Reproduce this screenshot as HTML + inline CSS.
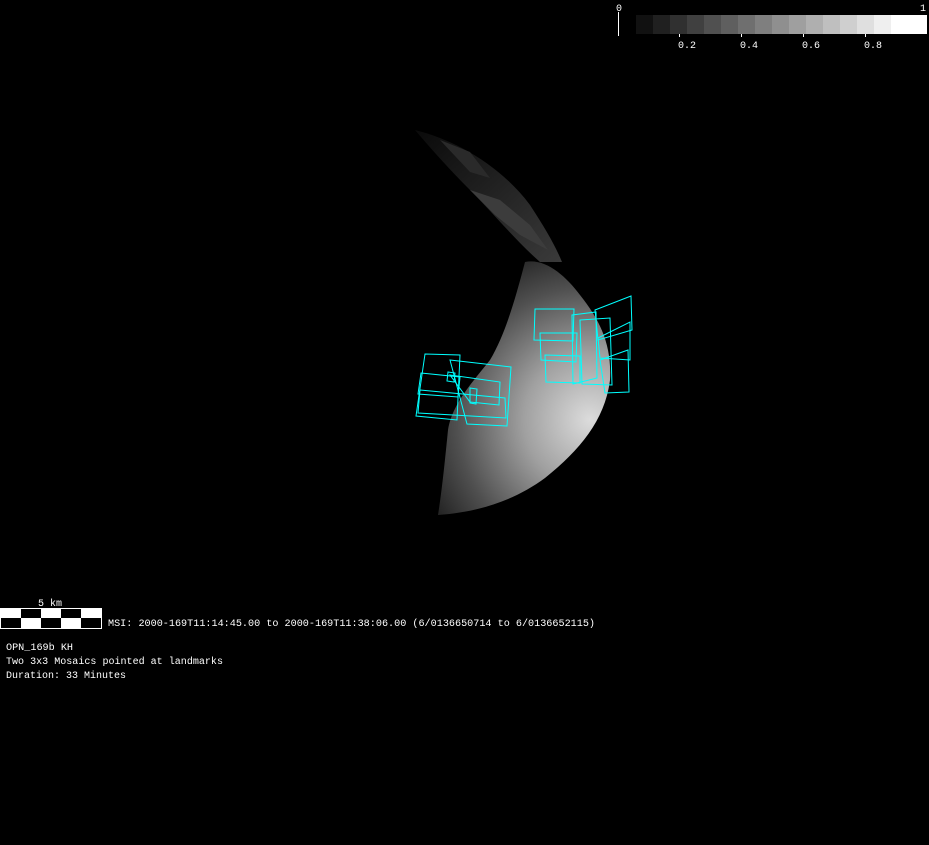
<!DOCTYPE html>
<html><head><style>
html,body{margin:0;padding:0;background:#000;width:929px;height:845px;overflow:hidden}
svg{display:block}
text{font-family:"Liberation Mono",monospace;fill:#fff;font-size:10px}
</style></head><body>
<svg width="929" height="845" viewBox="0 0 929 845">
<defs>
<radialGradient id="g" cx="590" cy="420" r="190" gradientUnits="userSpaceOnUse">
<stop offset="0" stop-color="#dcdcdc"/><stop offset="0.35" stop-color="#a0a0a0"/><stop offset="0.7" stop-color="#505050"/><stop offset="1" stop-color="#181818"/>
</radialGradient>
<linearGradient id="d" x1="0" y1="0" x2="1" y2="1">
<stop offset="0" stop-color="#0a0a0a"/><stop offset="1" stop-color="#3a3a3a"/>
</linearGradient>
</defs>
<line x1="618.5" y1="12" x2="618.5" y2="36" stroke="#fff"/>
<text x="616" y="11">0</text><text x="920" y="11">1</text>
<g>
<rect x="636" y="15" width="18" height="19" fill="#111"/>
<rect x="653" y="15" width="18" height="19" fill="#202020"/>
<rect x="670" y="15" width="18" height="19" fill="#303030"/>
<rect x="687" y="15" width="18" height="19" fill="#404040"/>
<rect x="704" y="15" width="18" height="19" fill="#505050"/>
<rect x="721" y="15" width="18" height="19" fill="#5f5f5f"/>
<rect x="738" y="15" width="18" height="19" fill="#6f6f6f"/>
<rect x="755" y="15" width="18" height="19" fill="#7f7f7f"/>
<rect x="772" y="15" width="18" height="19" fill="#8f8f8f"/>
<rect x="789" y="15" width="18" height="19" fill="#9f9f9f"/>
<rect x="806" y="15" width="18" height="19" fill="#afafaf"/>
<rect x="823" y="15" width="18" height="19" fill="#bfbfbf"/>
<rect x="840" y="15" width="18" height="19" fill="#cfcfcf"/>
<rect x="857" y="15" width="18" height="19" fill="#dfdfdf"/>
<rect x="874" y="15" width="18" height="19" fill="#efefef"/>
<rect x="891" y="15" width="36" height="19" fill="#fff"/>
</g>
<g stroke="#fff"><line x1="679.5" y1="34" x2="679.5" y2="37"/><line x1="741.5" y1="34" x2="741.5" y2="37"/><line x1="803.5" y1="34" x2="803.5" y2="37"/><line x1="865.5" y1="34" x2="865.5" y2="37"/></g>
<text x="678" y="48">0.2</text><text x="740" y="48">0.4</text><text x="802" y="48">0.6</text><text x="864" y="48">0.8</text>
<path d="M415,130 C455,140 500,165 530,205 C545,228 555,245 562,262 L540,262 C515,240 495,215 470,190 C450,170 432,150 415,130Z" fill="url(#d)"/>
<path d="M470,190 L500,200 L530,225 L548,250 L520,235 L495,215Z" fill="#3c3c3c"/>
<path d="M440,140 L470,152 L490,178 L470,172Z" fill="#2a2a2a"/>
<path d="M525,262 C545,258 565,275 580,295 C600,320 612,345 610,380 C605,420 580,450 545,478 C515,500 480,512 438,515 C442,490 445,460 448,430 C452,405 470,385 490,360 C505,335 515,300 525,262Z" fill="url(#g)"/>
<g fill="none" stroke="#0ff" stroke-width="1">
<path d="M425,354 L460,355 L457,420 L416,416Z"/>
<path d="M450,360 L511,367 L507,426 L467,424Z"/>
<path d="M421,373 L460,377 L458,397 L418,394Z"/>
<path d="M450,375 L500,382 L499,405 L470,402Z"/>
<path d="M420,390 L505,398 L506,418 L418,413Z"/>
<path d="M448,372 L455,373 L454,382 L447,381Z"/>
<path d="M470,388 L477,389 L476,404 L470,403Z"/>
<path d="M535,309 L574,309 L573,341 L534,340Z"/>
<path d="M540,333 L577,333 L576,362 L541,360Z"/>
<path d="M545,355 L580,356 L580,383 L546,382Z"/>
<path d="M572,315 L596,312 L597,378 L573,384Z"/>
<path d="M595,310 L631,296 L632,330 L598,340Z"/>
<path d="M598,338 L630,322 L630,360 L600,358Z"/>
<path d="M600,360 L628,350 L629,392 L605,393Z"/>
<path d="M580,320 L610,318 L612,385 L582,384Z"/>
</g>
<text x="38" y="606">5 km</text>
<rect x="0.5" y="608.5" width="101" height="20" fill="#000" stroke="#fff"/>
<g fill="#fff">
<rect x="1" y="609" width="20" height="9"/><rect x="41" y="609" width="20" height="9"/><rect x="81" y="609" width="20" height="9"/>
<rect x="21" y="618" width="20" height="10"/><rect x="61" y="618" width="20" height="10"/>
</g>
<text x="108" y="626" textLength="487" lengthAdjust="spacingAndGlyphs">MSI:  2000-169T11:14:45.00 to 2000-169T11:38:06.00 (6/0136650714 to 6/0136652115)</text>
<text x="6" y="650" textLength="67" lengthAdjust="spacingAndGlyphs">OPN_169b KH</text>
<text x="6" y="664" textLength="217" lengthAdjust="spacingAndGlyphs">Two 3x3 Mosaics pointed at landmarks</text>
<text x="6" y="678" textLength="120" lengthAdjust="spacingAndGlyphs">Duration: 33 Minutes</text>
</svg>
</body></html>
